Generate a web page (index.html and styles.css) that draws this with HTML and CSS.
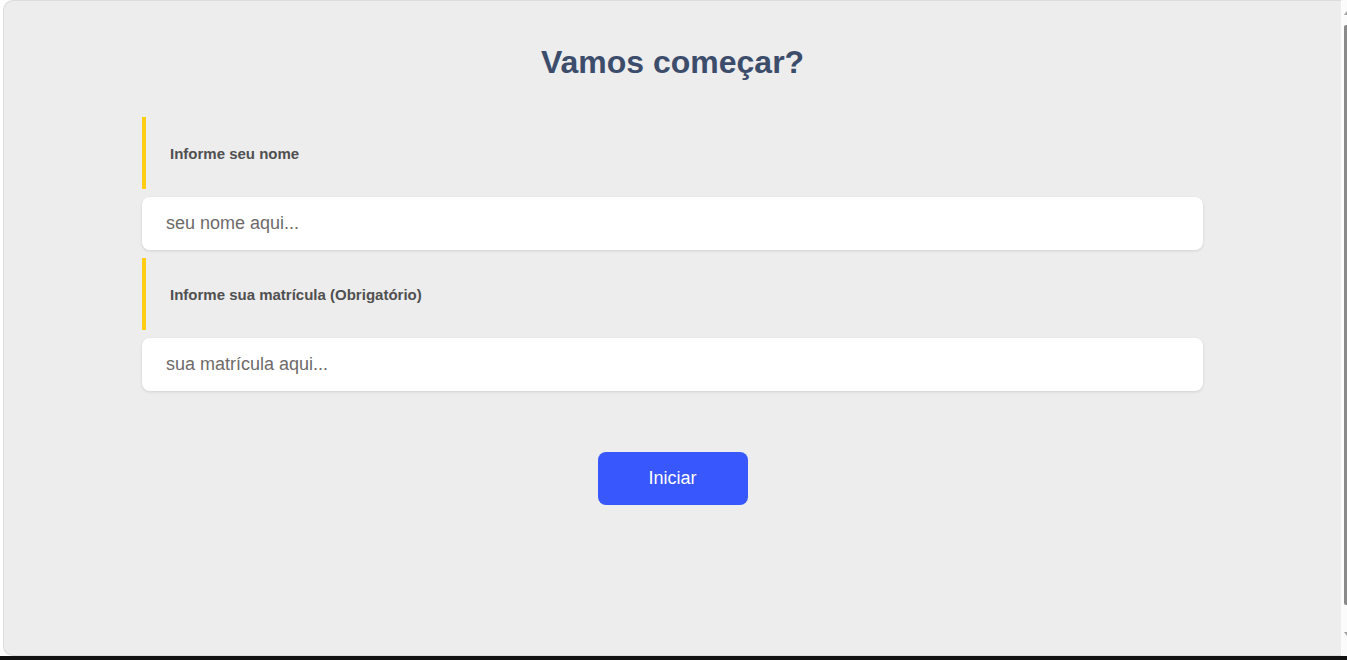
FILE: index.html
```html
<!DOCTYPE html>
<html lang="pt-BR">
<head>
<meta charset="utf-8">
<title>Vamos começar?</title>
<link rel="stylesheet" href="styles.css">
</head>
<body>
<div class="screen">
  <div class="row">
    <main class="card">
      <h1 class="title">Vamos começar?</h1>
      <form class="form">
        <label class="label" for="nome">Informe seu nome</label>
        <input class="input" id="nome" type="text" placeholder="seu nome aqui...">
        <label class="label" for="mat">Informe sua matrícula (Obrigatório)</label>
        <input class="input" id="mat" type="text" placeholder="sua matrícula aqui...">
        <div class="actions">
          <button class="btn" type="button">Iniciar</button>
        </div>
      </form>
    </main>
    <div class="scrollbar">
      <div class="arrow up"></div>
      <div class="thumb"></div>
      <div class="arrow down"></div>
    </div>
  </div>
  <div class="bottom"></div>
</div>
</body>
</html>
```
FILE: styles.css
```css
* { box-sizing: border-box; }
html, body { margin: 0; padding: 0; }
body {
  background: #fff;
  font-family: "Liberation Sans", Arial, sans-serif;
  width: 1347px;
  height: 660px;
  overflow: hidden;
}
.screen { display: flex; flex-direction: column; height: 660px; }
.row { display: flex; flex: 1; padding-left: 3px; }
.card {
  flex: 1;
  height: 656px;
  background: #ededed;
  border: 1px solid #dcdcdc;
  border-right: none;
  border-radius: 10px 0 0 10px;
  padding-top: 41px;
}
.title {
  margin: 0;
  text-align: center;
  font-size: 32px;
  font-weight: 700;
  color: #3c4c6b;
  line-height: 40px;
}
.form {
  width: 1061px;
  margin: 35px auto 0 138px;
  display: flex;
  flex-direction: column;
  gap: 8px;
}
.label {
  display: flex;
  align-items: center;
  height: 72px;
  border-left: 4px solid #fecd14;
  padding-left: 24px;
  font-size: 15px;
  font-weight: 700;
  color: #505050;
}
.input {
  height: 53px;
  border: none;
  border-radius: 8px;
  background: #fff;
  box-shadow: 0 1px 3px rgba(0,0,0,0.12);
  padding: 0 24px;
  font-family: "Liberation Sans", Arial, sans-serif;
  font-size: 18px;
  color: #333;
  outline: none;
}
.input::placeholder { color: #6e6a6a; }
.actions { display: flex; justify-content: center; padding-top: 53px; }
.btn {
  width: 150px;
  height: 53px;
  border: none;
  border-radius: 8px;
  background: #3858fe;
  color: #fff;
  font-family: "Liberation Sans", Arial, sans-serif;
  font-size: 18px;
  margin-left: 0;
}
.scrollbar {
  width: 6px;
  height: 656px;
  background: #fbfbfb;
  display: flex;
  flex-direction: column;
  align-items: flex-end;
  padding-top: 11px;
}
.arrow { width: 0; height: 0; border-left: 3px solid transparent; }
.arrow.up { border-bottom: 4px solid #a0a0a0; margin-bottom: 10px; }
.thumb { width: 3px; height: 580px; background: #8a8a8a; border-radius: 2px 0 0 2px; }
.arrow.down { border-top: 4px solid #a0a0a0; margin-top: 27px; }
.bottom { height: 4px; background: #111; }
```
